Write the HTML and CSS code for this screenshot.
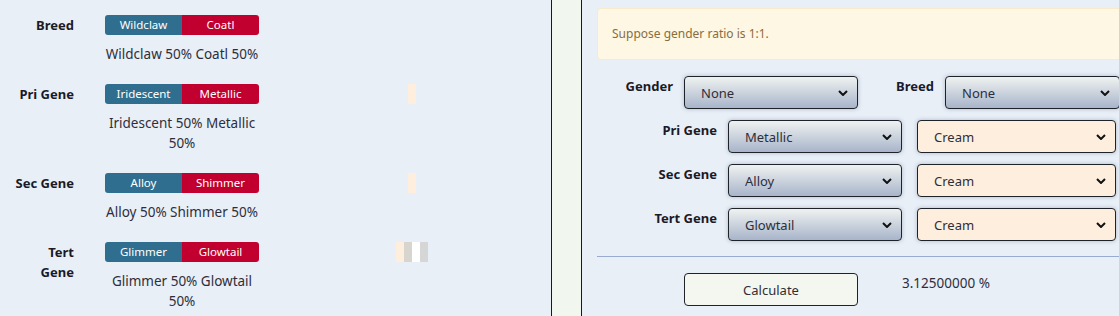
FILE: index.html
```html
<!DOCTYPE html>
<html lang="en">
<head>
    <meta charset="UTF-8">
    <title>Breeding Calculator</title>
    <meta name="viewport" content="width=device-width, initial-scale=1">
    <link rel="stylesheet" href="styles.css">
</head>
<body>
    <div class="layout">
        <div class="result-panel">
            <div class="gene-row">
                <div class="gene-label">Breed</div>
                <div class="gene-main">
                    <div class="split-bar">
                        <span class="part blue">Wildclaw</span><span class="part red">Coatl</span>
                    </div>
                    <div class="odds">Wildclaw 50% Coatl 50%</div>
                </div>
                <div class="swatches"></div>
            </div>
            <div class="gene-row">
                <div class="gene-label">Pri Gene</div>
                <div class="gene-main">
                    <div class="split-bar">
                        <span class="part blue">Iridescent</span><span class="part red">Metallic</span>
                    </div>
                    <div class="odds">Iridescent 50% Metallic 50%</div>
                </div>
                <div class="swatches">
                    <span class="swatch cream"></span>
                </div>
            </div>
            <div class="gene-row">
                <div class="gene-label">Sec Gene</div>
                <div class="gene-main">
                    <div class="split-bar">
                        <span class="part blue">Alloy</span><span class="part red">Shimmer</span>
                    </div>
                    <div class="odds">Alloy 50% Shimmer 50%</div>
                </div>
                <div class="swatches">
                    <span class="swatch cream"></span>
                </div>
            </div>
            <div class="gene-row">
                <div class="gene-label">Tert Gene</div>
                <div class="gene-main">
                    <div class="split-bar">
                        <span class="part blue">Glimmer</span><span class="part red">Glowtail</span>
                    </div>
                    <div class="odds">Glimmer 50% Glowtail 50%</div>
                </div>
                <div class="swatches">
                    <span class="swatch cream"></span><span class="swatch stone"></span><span class="swatch white"></span><span class="swatch grey"></span>
                </div>
            </div>
        </div>

        <div class="gutter"></div>

        <div class="calc-panel">
            <div class="alert">Suppose gender ratio is 1:1.</div>

            <div class="form-row top">
                <label>Gender</label>
                <div class="select-wrap">
                    <select class="pick"><option>None</option></select>
                    <svg class="chev" width="10" height="6" viewBox="0 0 10 6"><path d="M1 1l4 4 4-4" fill="none" stroke="#111" stroke-width="2"/></svg>
                </div>
                <label>Breed</label>
                <div class="select-wrap">
                    <select class="pick"><option>None</option></select>
                    <svg class="chev" width="10" height="6" viewBox="0 0 10 6"><path d="M1 1l4 4 4-4" fill="none" stroke="#111" stroke-width="2"/></svg>
                </div>
            </div>

            <div class="form-row gene">
                <label>Pri Gene</label>
                <div class="select-wrap">
                    <select class="pick"><option>Metallic</option></select>
                    <svg class="chev" width="10" height="6" viewBox="0 0 10 6"><path d="M1 1l4 4 4-4" fill="none" stroke="#111" stroke-width="2"/></svg>
                </div>
                <div class="select-wrap color">
                    <select class="pick cream"><option>Cream</option></select>
                    <svg class="chev" width="10" height="6" viewBox="0 0 10 6"><path d="M1 1l4 4 4-4" fill="none" stroke="#111" stroke-width="2"/></svg>
                </div>
            </div>

            <div class="form-row gene">
                <label>Sec Gene</label>
                <div class="select-wrap">
                    <select class="pick"><option>Alloy</option></select>
                    <svg class="chev" width="10" height="6" viewBox="0 0 10 6"><path d="M1 1l4 4 4-4" fill="none" stroke="#111" stroke-width="2"/></svg>
                </div>
                <div class="select-wrap color">
                    <select class="pick cream"><option>Cream</option></select>
                    <svg class="chev" width="10" height="6" viewBox="0 0 10 6"><path d="M1 1l4 4 4-4" fill="none" stroke="#111" stroke-width="2"/></svg>
                </div>
            </div>

            <div class="form-row gene">
                <label>Tert Gene</label>
                <div class="select-wrap">
                    <select class="pick"><option>Glowtail</option></select>
                    <svg class="chev" width="10" height="6" viewBox="0 0 10 6"><path d="M1 1l4 4 4-4" fill="none" stroke="#111" stroke-width="2"/></svg>
                </div>
                <div class="select-wrap color">
                    <select class="pick cream"><option>Cream</option></select>
                    <svg class="chev" width="10" height="6" viewBox="0 0 10 6"><path d="M1 1l4 4 4-4" fill="none" stroke="#111" stroke-width="2"/></svg>
                </div>
            </div>

            <div class="divider"></div>

            <div class="calc-row">
                <button class="btn-calc" type="button">Calculate</button>
                <span class="result">3.12500000 %</span>
            </div>
        </div>
    </div>
</body>
</html>
```

FILE: styles.css
```css
html, body {
    height: 100%;
}
body {
    margin: 0;
    overflow: hidden;
    background: #e8eff7;
    font-family: 'Noto Sans', 'Open Sans', sans-serif;
    font-size: 13px;
    line-height: 20px;
    color: #2e2e3a;
}
.layout {
    display: flex;
    height: 100%;
}

/* panel izquierdo: resultados */
.result-panel {
    width: 551px;
    flex-shrink: 0;
    padding: 15px 0 0 14px;
    box-sizing: border-box;
}
.gene-row {
    display: flex;
    align-items: flex-start;
    margin-bottom: 20px;
}
.gene-label {
    width: 60px;
    text-align: right;
    font-weight: 700;
    color: #1a1a28;
}
.gene-main {
    width: 154px;
    margin-left: 31px;
}
.split-bar {
    display: flex;
    height: 20px;
    border-radius: 3px;
    overflow: hidden;
    margin-bottom: 9px;
}
.part {
    flex: 1;
    text-align: center;
    color: #fff;
    font-size: 11.5px;
    line-height: 20px;
}
.part.blue { background: #2f6e8e; }
.part.red { background: #c20030; }
.odds {
    text-align: center;
    font-size: 13.5px;
}
.swatches {
    flex: 1;
    margin-left: 14px;
    display: flex;
    justify-content: center;
}
.swatch {
    width: 8px;
    height: 20px;
}
.swatch.cream { background: #feeedd; }
.swatch.stone { background: #d8d5cf; }
.swatch.white { background: #ffffff; }
.swatch.grey { background: #d6d6d6; }

.gutter {
    width: 29px;
    flex-shrink: 0;
    background: #f1f6ef;
    border-left: 1px solid #151a22;
    border-right: 1px solid #151a22;
}

/* panel derecho: calculadora (se corta en el borde) */
.calc-panel {
    flex: 1;
    min-width: 0;
    overflow: hidden;
    padding: 8px 0 0 15px;
}
.alert {
    width: 540px;
    background: #fdf7e4;
    border: 1px solid #f8ebcd;
    border-radius: 4px;
    color: #8a6d3b;
    font-size: 12px;
    padding: 15px 14px;
    margin-bottom: 16px;
}
.form-row {
    display: grid;
    column-gap: 11px;
    margin-bottom: 11px;
}
.form-row.top {
    grid-template-columns: 76px 174px 65px 175px;
}
.form-row.gene {
    grid-template-columns: 120px 174px 203px;
}
.form-row label {
    text-align: right;
    font-weight: 700;
    color: #1a1a28;
}
.select-wrap {
    position: relative;
    height: 33px;
}
.select-wrap.color {
    margin-left: 4px;
}
.pick {
    appearance: none;
    width: 100%;
    height: 33px;
    padding: 1px 30px 0 16px;
    border: 1px solid #1e2229;
    border-radius: 4px;
    background: linear-gradient(#eff2f1, #a8b4ca);
    box-shadow: 0 0 4px rgba(70, 90, 110, 0.35);
    font-family: inherit;
    font-size: 13px;
    color: #2e2e3a;
}
.pick.cream {
    background: #feeedd;
}
.chev {
    position: absolute;
    right: 10px;
    top: 14px;
    pointer-events: none;
}
.divider {
    height: 1px;
    background: #9aabd2;
    margin: 15px 0 16px;
}
.calc-row {
    display: flex;
    align-items: flex-start;
    padding-left: 87px;
}
.btn-calc {
    width: 174px;
    height: 33px;
    background: #f3f7f0;
    border: 1px solid #1e2229;
    border-radius: 4px;
    font-family: inherit;
    font-size: 13px;
    color: #2e2e3a;
}
.result {
    margin-left: 44px;
    font-size: 13.5px;
}
```
